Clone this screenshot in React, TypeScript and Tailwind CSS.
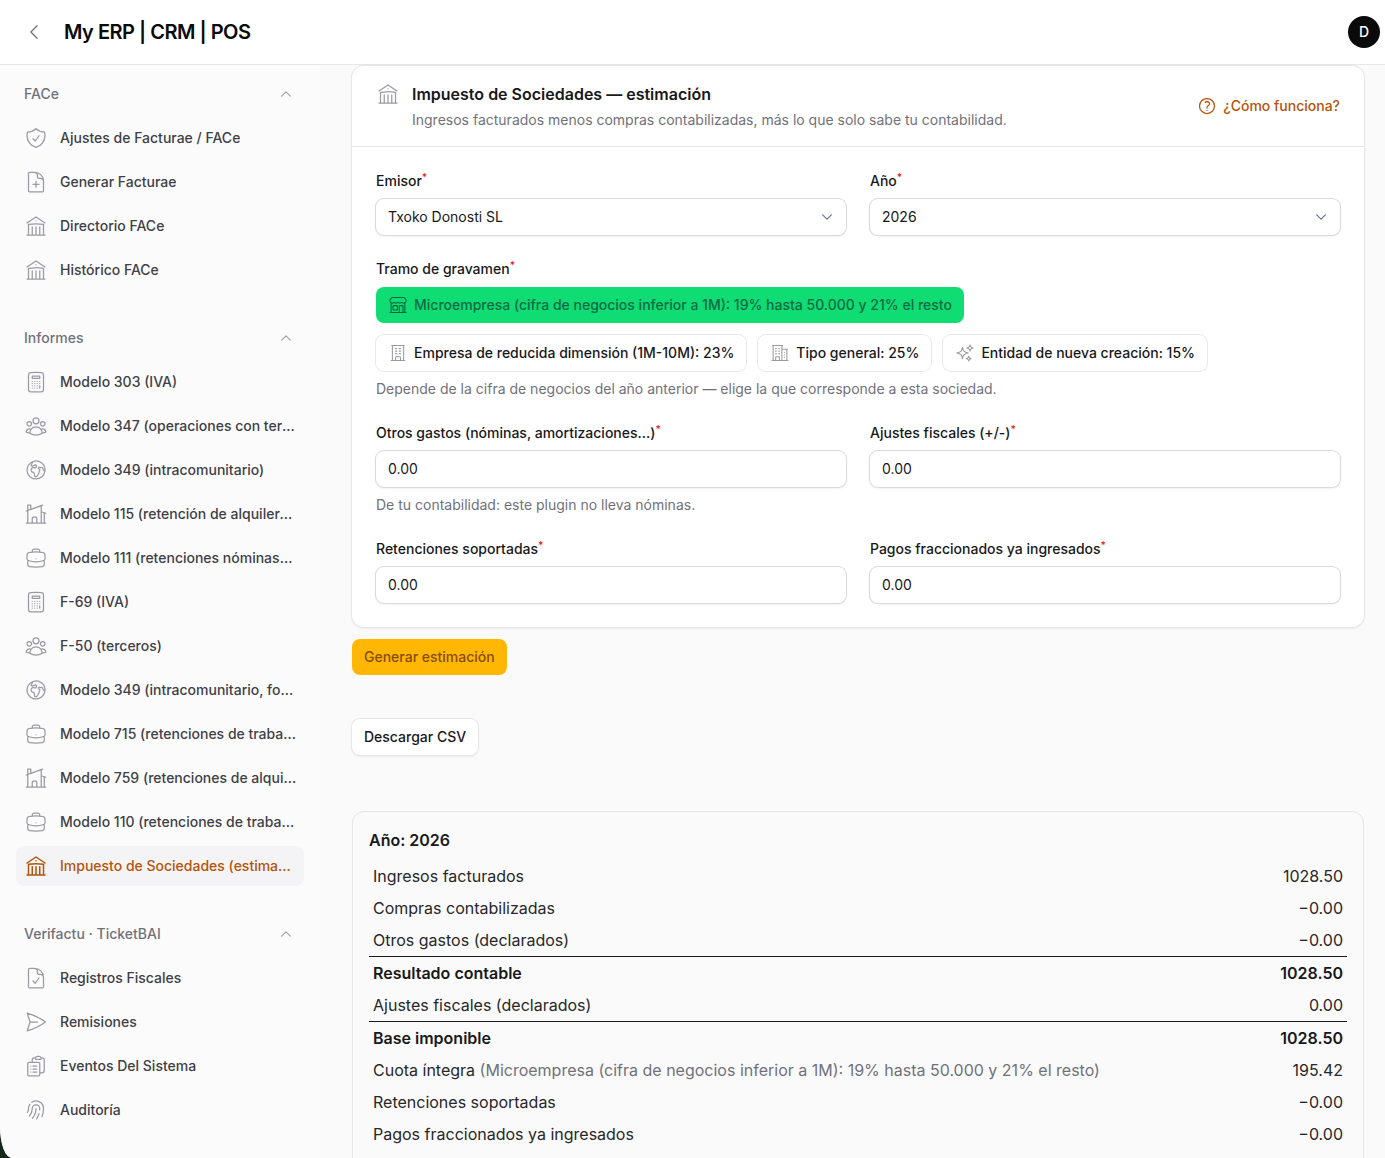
import React from "react";
import {
  HiOutlineShieldCheck, HiOutlineDocumentPlus, HiOutlineBuildingLibrary, HiOutlineCalculator,
  HiOutlineUserGroup, HiOutlineGlobeEuropeAfrica, HiOutlineHomeModern, HiOutlineBriefcase,
  HiOutlineChevronUp, HiOutlineChevronDown, HiOutlineChevronLeft, HiOutlineDocumentCheck,
  HiOutlinePaperAirplane, HiOutlineClipboardDocumentList, HiOutlineFingerPrint,
  HiOutlineBuildingStorefront, HiOutlineBuildingOffice, HiOutlineBuildingOffice2,
  HiOutlineSparkles, HiOutlineQuestionMarkCircle,
} from "react-icons/hi2";

type Ic = React.ComponentType<{ className?: string; strokeWidth?: number }>;
type Item = { label: string; icon: Ic; active?: boolean };

const sections: { title: string; items: Item[] }[] = [
  { title: "FACe", items: [
    { label: "Ajustes de Facturae / FACe", icon: HiOutlineShieldCheck },
    { label: "Generar Facturae", icon: HiOutlineDocumentPlus },
    { label: "Directorio FACe", icon: HiOutlineBuildingLibrary },
    { label: "Histórico FACe", icon: HiOutlineBuildingLibrary },
  ]},
  { title: "Informes", items: [
    { label: "Modelo 303 (IVA)", icon: HiOutlineCalculator },
    { label: "Modelo 347 (operaciones con terceros)", icon: HiOutlineUserGroup },
    { label: "Modelo 349 (intracomunitario)", icon: HiOutlineGlobeEuropeAfrica },
    { label: "Modelo 115 (retención de alquileres)", icon: HiOutlineHomeModern },
    { label: "Modelo 111 (retenciones nóminas/profesionales)", icon: HiOutlineBriefcase },
    { label: "F-69 (IVA)", icon: HiOutlineCalculator },
    { label: "F-50 (terceros)", icon: HiOutlineUserGroup },
    { label: "Modelo 349 (intracomunitario, foral)", icon: HiOutlineGlobeEuropeAfrica },
    { label: "Modelo 715 (retenciones de trabajo)", icon: HiOutlineBriefcase },
    { label: "Modelo 759 (retenciones de alquileres)", icon: HiOutlineHomeModern },
    { label: "Modelo 110 (retenciones de trabajo)", icon: HiOutlineBriefcase },
    { label: "Impuesto de Sociedades (estimación)", icon: HiOutlineBuildingLibrary, active: true },
  ]},
  { title: "Verifactu · TicketBAI", items: [
    { label: "Registros Fiscales", icon: HiOutlineDocumentCheck },
    { label: "Remisiones", icon: HiOutlinePaperAirplane },
    { label: "Eventos Del Sistema", icon: HiOutlineClipboardDocumentList },
    { label: "Auditoría", icon: HiOutlineFingerPrint },
  ]},
];

function Label({ children }: { children: React.ReactNode }) {
  return (
    <label className="block text-sm leading-5 font-medium text-[#18181b] mb-2">
      {children}
      <sup className="text-[#dc2626] font-medium">*</sup>
    </label>
  );
}

function SelectField({ label, value }: { label: string; value: string }) {
  return (
    <div>
      <Label>{label}</Label>
      <div className="h-9 rounded-lg bg-white ring-1 ring-[#d9d9de] shadow-sm flex items-center justify-between pl-3 pr-[12px] text-sm text-[#18181b]">
        <span>{value}</span>
        <HiOutlineChevronDown className="w-[14px] h-[14px] text-[#6b7280]" strokeWidth={2} />
      </div>
    </div>
  );
}

function InputField({ label, help }: { label: string; help?: string }) {
  return (
    <div>
      <Label>{label}</Label>
      <input
        readOnly
        value="0.00"
        className="block w-full h-9 rounded-lg bg-white ring-1 ring-[#d9d9de] shadow-sm px-3 pb-px text-sm text-[#18181b] outline-none"
      />
      {help && <p className="mt-2 text-sm leading-5 text-[#71717a]">{help}</p>}
    </div>
  );
}

function Choice({ icon: Icon, label, on }: { icon: Ic; label: string; on?: boolean }) {
  return (
    <div
      className={
        "h-9 rounded-lg px-3 flex items-center gap-1.5 text-sm font-medium w-fit whitespace-nowrap " +
        (on ? "bg-[#0fdc72] text-[#0b6b45]" : "bg-white ring-1 ring-[#e8e8ea] text-[#18181b]")
      }
    >
      <Icon className={"w-5 h-5 " + (on ? "text-[#0a5f3d]" : "text-[#9a9aa3]")} strokeWidth={1.25} />
      <span>{label}</span>
    </div>
  );
}

const rows: { label: string; note?: string; value: string; strong?: boolean; line?: boolean }[] = [
  { label: "Ingresos facturados", value: "1028.50" },
  { label: "Compras contabilizadas", value: "−0.00" },
  { label: "Otros gastos (declarados)", value: "−0.00" },
  { label: "Resultado contable", value: "1028.50", strong: true, line: true },
  { label: "Ajustes fiscales (declarados)", value: "0.00" },
  { label: "Base imponible", value: "1028.50", strong: true, line: true },
  { label: "Cuota íntegra", note: "(Microempresa (cifra de negocios inferior a 1M): 19% hasta 50.000 y 21% el resto)", value: "195.42" },
  { label: "Retenciones soportadas", value: "−0.00" },
  { label: "Pagos fraccionados ya ingresados", value: "−0.00" },
];

export default function App() {
  return (
    <div className="h-[1158px] overflow-hidden bg-[#14281c] font-['Inter',sans-serif]">
      <div className="h-full flex flex-col bg-[#fafafa] rounded-bl-[12px_32px] overflow-hidden">
        <header className="h-[65px] shrink-0 bg-white border-b border-[#e7e7e9] flex items-center pl-6 pr-[5px]">
          <HiOutlineChevronLeft className="w-5 h-5 text-[#6b7280]" strokeWidth={1.5} />
          <h1 className="ml-5 text-xl font-semibold tracking-[-0.5px] text-[#0a0a0a]">My ERP | CRM | POS</h1>
          <div className="ml-auto w-8 h-8 rounded-full bg-[#0a0a0a] text-white text-sm font-medium flex items-center justify-center">D</div>
        </header>

        <div className="flex-1 flex min-h-0">
          <aside className="w-[320px] shrink-0 bg-[#fbfbfc] px-4 pt-[17px]">
            {sections.map((s) => (
              <section key={s.title} className="mb-9">
                <div className="h-6 mb-3 px-2 flex items-center justify-between text-sm font-medium text-[#71717a]">
                  <span>{s.title}</span>
                  <HiOutlineChevronUp className="w-[14px] h-[14px] mr-[3px] text-[#a1a1aa]" strokeWidth={2} />
                </div>
                <ul className="flex flex-col gap-1">
                  {s.items.map((it) => (
                    <li
                      key={it.label}
                      className={
                        "h-10 rounded-lg pl-2 pr-[7px] flex items-center gap-3 text-sm font-medium " +
                        (it.active ? "bg-[#f4f4f6] text-[#b45309]" : "text-[#3f3f46]")
                      }
                    >
                      <it.icon
                        className={"w-6 h-6 shrink-0 " + (it.active ? "text-[#b45309]" : "text-[#9a9aa3]")}
                        strokeWidth={it.active ? 1.5 : 1.25}
                      />
                      <span className="truncate">{it.label}</span>
                    </li>
                  ))}
                </ul>
              </section>
            ))}
          </aside>

          <main className="flex-1 min-w-0 pl-8 pr-[21px] pt-px">
            <div className="rounded-xl bg-white ring-1 ring-[#e7e7e9] shadow-sm">
              <div className="h-[81px] border-b border-[#e7e7e9] px-6 flex items-center justify-between">
                <div className="flex gap-3 self-start pt-4">
                  <HiOutlineBuildingLibrary className="w-6 h-6 text-[#9a9aa3]" strokeWidth={1.25} />
                  <div>
                    <h2 className="text-base leading-6 font-semibold text-[#18181b]">Impuesto de Sociedades — estimación</h2>
                    <p className="mt-1 text-sm leading-5 text-[#71717a]">Ingresos facturados menos compras contabilizadas, más lo que solo sabe tu contabilidad.</p>
                  </div>
                </div>
                <div className="flex items-center gap-1.5 text-sm font-medium text-[#b45309]">
                  <HiOutlineQuestionMarkCircle className="w-5 h-5" strokeWidth={1.5} />
                  <span>¿Cómo funciona?</span>
                </div>
              </div>

              <div className="p-6 flex flex-col gap-6">
                <div className="grid grid-cols-2 gap-6">
                  <SelectField label="Emisor" value="Txoko Donosti SL" />
                  <SelectField label="Año" value="2026" />
                </div>
                <div>
                  <Label>Tramo de gravamen</Label>
                  <div className="flex flex-col gap-3">
                    <Choice on icon={HiOutlineBuildingStorefront} label="Microempresa (cifra de negocios inferior a 1M): 19% hasta 50.000 y 21% el resto" />
                    <div className="flex gap-3">
                      <Choice icon={HiOutlineBuildingOffice} label="Empresa de reducida dimensión (1M-10M): 23%" />
                      <Choice icon={HiOutlineBuildingOffice2} label="Tipo general: 25%" />
                      <Choice icon={HiOutlineSparkles} label="Entidad de nueva creación: 15%" />
                    </div>
                  </div>
                  <p className="mt-2 text-sm leading-5 text-[#71717a]">Depende de la cifra de negocios del año anterior — elige la que corresponde a esta sociedad.</p>
                </div>
                <div className="grid grid-cols-2 gap-6">
                  <InputField label="Otros gastos (nóminas, amortizaciones...)" help="De tu contabilidad: este plugin no lleva nóminas." />
                  <InputField label="Ajustes fiscales (+/-)" />
                </div>
                <div className="grid grid-cols-2 gap-6">
                  <InputField label="Retenciones soportadas" />
                  <InputField label="Pagos fraccionados ya ingresados" />
                </div>
              </div>
            </div>

            <button className="block mt-3 h-9 px-3 rounded-lg bg-[#ffb703] text-sm font-medium text-[#8a4b08]">Generar estimación</button>
            <button className="block mt-11 h-9 px-3 rounded-lg bg-white ring-1 ring-[#e7e7e9] shadow-sm text-sm font-medium text-[#18181b]">Descargar CSV</button>

            <div className="mt-14 rounded-xl border border-[#e5e5e7] bg-[#fafafa] px-4 pt-4 pb-20">
              <h3 className="text-base leading-6 font-semibold text-[#18181b] mb-2">Año: 2026</h3>
              <table className="w-full text-base text-[#27272a]">
                <tbody>
                  {rows.map((r) => (
                    <tr key={r.label} className={(r.line ? "border-t border-[#18181b] " : "") + (r.strong ? "font-semibold text-[#18181b]" : "")}>
                      <td className="px-1 py-1 leading-6">
                        {r.label}
                        {r.note && <span className="text-[#71717a]"> {r.note}</span>}
                      </td>
                      <td className="px-1 py-1 leading-6 text-right">{r.value}</td>
                    </tr>
                  ))}
                </tbody>
              </table>
            </div>
          </main>
        </div>
      </div>
    </div>
  );
}
